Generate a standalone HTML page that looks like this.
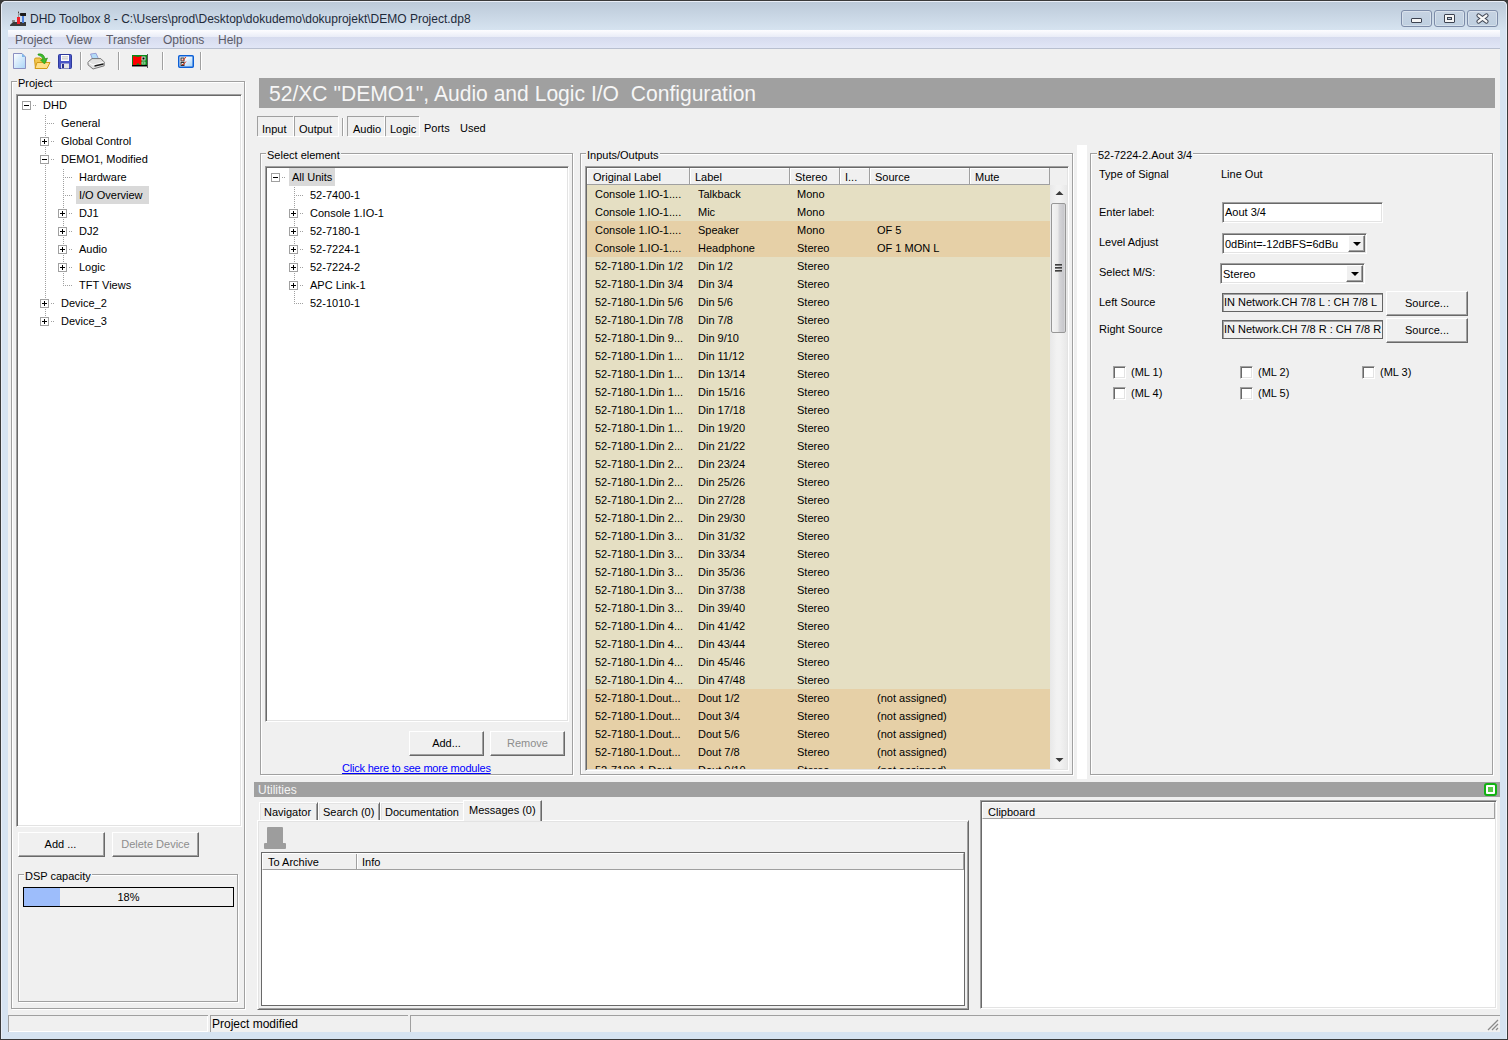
<!DOCTYPE html><html><head><meta charset="utf-8"><style>
*{margin:0;padding:0;box-sizing:border-box}
html,body{width:1508px;height:1040px;overflow:hidden;background:#f0f0f0}
body{position:relative;font-family:"Liberation Sans",sans-serif;font-size:11px;color:#000}
.a{position:absolute}
.t{font-size:11px;line-height:13px;white-space:nowrap}
.etch{border:1px solid #a0a0a0;box-shadow:inset 1px 1px 0 #fff,1px 1px 0 #fff}
.sunk{border:1px solid;border-color:#a0a0a0 #fff #fff #a0a0a0;box-shadow:inset 1px 1px 0 #696969,inset -1px -1px 0 #e3e3e3}
.btn{border:1px solid;border-color:#fff #696969 #696969 #fff;box-shadow:inset -1px -1px 0 #a0a0a0;background:#f0f0f0}
.pb{border:1px solid #a0a0a0;width:9px;height:9px;background:#fff}
.pb:before{content:"";position:absolute;left:1px;top:3px;width:5px;height:1px;background:#000}
.pl:after{content:"";position:absolute;left:3px;top:1px;width:1px;height:5px;background:#000}
.dv{border-left:1px dotted #a0a0a0}
.dh{border-top:1px dotted #a0a0a0}
</style></head><body>
<div class="a" style="left:0px;top:0px;width:1508px;height:1040px;background:#3a3a3a"></div><div class="a" style="left:1px;top:1px;width:1506px;height:1038px;background:#d6e3f1;border-radius:5px 5px 0 0;box-shadow:inset 1px 1px 0 #e9eef7,inset -1px 0 0 #e9eef7"></div><div class="a" style="left:2px;top:2px;width:1504px;height:28px;background:linear-gradient(#bccad9,#d6e3f0);border-radius:4px 4px 0 0"></div><svg class="a" style="left:10px;top:10px" width="17" height="17" viewBox="0 0 17 17">
<path d="M0 15 L3 12 H16 V16 H0 Z" fill="#3a3a3a"/><rect x="2" y="10" width="3" height="2" fill="#888"/>
<rect x="7" y="7" width="3" height="7" fill="#f0202a"/><rect x="12" y="5" width="2" height="8" fill="#4a80e0"/>
<path d="M9.5 4 L10.5 3 H16 V6 H10.5 Z" fill="#1a1a1a"/><rect x="8" y="1" width="1" height="6" fill="#999"/><rect x="8" y="2" width="1" height="1" fill="#444"/></svg><div class="a" style="left:30px;top:12px;font-size:12px;line-height:15px;color:#1e2a3a;white-space:nowrap">DHD Toolbox 8 - C:\Users\prod\Desktop\dokudemo\dokuprojekt\DEMO Project.dp8</div><div class="a" style="left:1401px;top:10px;width:31px;height:17px;border:1px solid #7d8ca8;border-radius:3px;background:linear-gradient(#c6d3e2,#bfcfe0);box-shadow:inset 0 0 0 1px rgba(255,255,255,.35)"></div><div class="a" style="left:1434px;top:10px;width:31px;height:17px;border:1px solid #7d8ca8;border-radius:3px;background:linear-gradient(#c6d3e2,#bfcfe0);box-shadow:inset 0 0 0 1px rgba(255,255,255,.35)"></div><div class="a" style="left:1467px;top:10px;width:31px;height:17px;border:1px solid #7d8ca8;border-radius:3px;background:linear-gradient(#c6d3e2,#bfcfe0);box-shadow:inset 0 0 0 1px rgba(255,255,255,.35)"></div><div class="a" style="left:1411px;top:18px;width:11px;height:5px;background:#f4f4f4;border:1px solid #3c4250;border-radius:1px"></div><div class="a" style="left:1444px;top:14px;width:11px;height:9px;background:#f4f4f4;border:1px solid #3c4250;border-radius:1px"><div class="a" style="left:2px;top:2px;width:5px;height:3px;border:1px solid #3c4250;background:#bcd"></div></div><svg class="a" style="left:1474px;top:11px" width="17" height="15" viewBox="0 0 17 15"><path d="M4.5 4.5 L12.5 10.5 M12.5 4.5 L4.5 10.5" stroke="#3c4250" stroke-width="4.2" stroke-linecap="round"/><path d="M4.5 4.5 L12.5 10.5 M12.5 4.5 L4.5 10.5" stroke="#f6f6f6" stroke-width="2.2" stroke-linecap="round"/></svg><div class="a" style="left:8px;top:30px;width:1492px;height:1002px;background:#f0f0f0"></div><div class="a" style="left:8px;top:30px;width:1492px;height:19px;background:linear-gradient(#fdfdff 0px,#e9ecf7 7px,#d6dbee 7px,#e1e6f6 18px);border-bottom:1px solid #b8bfcf"></div><div class="a" style="left:15px;top:33px;font-size:12px;line-height:15px;color:#5c5c68;white-space:nowrap">Project</div><div class="a" style="left:66px;top:33px;font-size:12px;line-height:15px;color:#5c5c68;white-space:nowrap">View</div><div class="a" style="left:106px;top:33px;font-size:12px;line-height:15px;color:#5c5c68;white-space:nowrap">Transfer</div><div class="a" style="left:163px;top:33px;font-size:12px;line-height:15px;color:#5c5c68;white-space:nowrap">Options</div><div class="a" style="left:218px;top:33px;font-size:12px;line-height:15px;color:#5c5c68;white-space:nowrap">Help</div><svg class="a" style="left:13px;top:53px" width="14" height="17" viewBox="0 0 14 17">
<defs><linearGradient id="gd" x1="0" y1="0" x2="1" y2="1"><stop offset="0" stop-color="#fff"/><stop offset="1" stop-color="#a9d4f6"/></linearGradient></defs>
<path d="M0.5 0.5 H9 L12.5 4 V15.5 H0.5 Z" fill="url(#gd)" stroke="#8b90c2"/><path d="M9 0.5 V4 H12.5 Z" fill="#7fb8ea"/></svg><svg class="a" style="left:34px;top:53px" width="17" height="17" viewBox="0 0 17 17">
<path d="M0.5 6.5 Q0.5 5 2 5 H6 L7 6 H12 V15.5 H1.5 Z" fill="#f3c74e" stroke="#d29a16"/>
<path d="M1 15.5 L3 9.5 H16 L13 15.5 Z" fill="#ffe08a" stroke="#d29a16"/>
<path d="M4 1 Q10 0 11 6 L13.5 5 L10.5 11 L6.5 7 L9 6.5 Q8.5 3 4 2 Z" fill="#3fbd2c" stroke="#1f8a10" stroke-width="0.6"/></svg><svg class="a" style="left:58px;top:54px" width="14" height="15" viewBox="0 0 14 15">
<path d="M0.5 1.5 Q0.5 0.5 1.5 0.5 H12.5 Q13.5 0.5 13.5 1.5 V13.5 Q13.5 14.5 12.5 14.5 H1.5 Q0.5 14.5 0.5 13.5Z" fill="#4a56c6" stroke="#2e3a9c"/>
<rect x="3" y="1" width="8" height="6" fill="#fff"/><rect x="4" y="2.5" width="6" height="0.8" fill="#aaa"/><rect x="4" y="4.5" width="6" height="0.8" fill="#aaa"/>
<rect x="3" y="9.5" width="8" height="5" fill="#e6e6e6"/><rect x="4" y="10" width="2" height="4" fill="#2a2f8a"/></svg><div class="a" style="left:80px;top:52px;width:1px;height:18px;background:#a0a0a0;box-shadow:1px 0 0 #fff"></div><svg class="a" style="left:87px;top:52px" width="18" height="18" viewBox="0 0 18 18">
<path d="M3.5 2 L9 1.3 L11.8 7.5 L6 8.5 Z" fill="#b4dcf7" stroke="#8a8fd0" stroke-width="0.8"/>
<path d="M1 10 L5 6.6 H13.8 L17.2 10 V13.8 L6 17 L1 12.8 Z" fill="#e2e2e2" stroke="#6a6a6a" stroke-width="0.9"/>
<path d="M1.5 10.2 L6 13 L16.8 10.2" fill="none" stroke="#fff" stroke-width="0.9"/>
<path d="M7.5 13.2 L16.5 11.2 V12.8 L7.5 14.8 Z" fill="#1a1a1a"/></svg><div class="a" style="left:118px;top:52px;width:1px;height:18px;background:#a0a0a0;box-shadow:1px 0 0 #fff"></div><svg class="a" style="left:132px;top:54px" width="17" height="14" viewBox="0 0 17 14">
<rect x="0" y="1" width="16" height="12" fill="#fff"/><rect x="0" y="1" width="15" height="11" fill="#0a8a1a"/>
<path d="M1 2 L6 3 L10 2 L9 12 L6 9 L3 12 L1 11 Z" fill="#ff0000"/><rect x="0" y="11" width="15" height="1.5" fill="#000"/>
<rect x="10" y="3" width="3" height="3" fill="#000" stroke="#fff" stroke-width="0.8"/><rect x="10" y="8" width="3" height="2" fill="none" stroke="#fff" stroke-width="0.6"/>
<rect x="15" y="0" width="1" height="14" fill="#555"/></svg><div class="a" style="left:162px;top:52px;width:1px;height:18px;background:#a0a0a0;box-shadow:1px 0 0 #fff"></div><svg class="a" style="left:178px;top:55px" width="16" height="13" viewBox="0 0 16 13">
<defs><linearGradient id="gc" x1="0" y1="0" x2="1" y2="1"><stop offset="0.3" stop-color="#fff"/><stop offset="1" stop-color="#9ccdf7"/></linearGradient></defs>
<rect x="0.75" y="0.75" width="14.5" height="11.5" rx="1" fill="url(#gc)" stroke="#0b5fd6" stroke-width="1.5"/>
<rect x="3" y="3" width="3" height="3" fill="none" stroke="#333" stroke-width="1"/><rect x="3" y="7.5" width="3" height="3" fill="none" stroke="#333" stroke-width="1"/>
<path d="M4 4.5 L5 5.5 L8 2 M4 9 L5 10 L8 6.5" stroke="#e53a1a" stroke-width="1" fill="none"/></svg><div class="a" style="left:200px;top:52px;width:1px;height:18px;background:#a0a0a0;box-shadow:1px 0 0 #fff"></div><div class="a etch" style="left:11px;top:81px;width:234px;height:928px"></div><div class="a t" style="left:17px;top:77px;background:#f0f0f0;padding:0 1px 0 1px">Project</div><div class="a sunk" style="left:16px;top:94px;width:226px;height:733px;background:#fff"></div><div class="a" style="left:45px;top:115px;width:1px;height:207px;background:repeating-linear-gradient(#a0a0a0 0 1px,transparent 1px 2px)"></div><div class="a" style="left:63px;top:169px;width:1px;height:117px;background:repeating-linear-gradient(#a0a0a0 0 1px,transparent 1px 2px)"></div><div class="a" style="left:33px;top:105px;width:3px;height:1px;background:repeating-linear-gradient(90deg,#a0a0a0 0 1px,transparent 1px 2px)"></div><div class="a pb" style="left:22px;top:101px"></div><div class="a t" style="left:43px;top:99px;">DHD</div><div class="a" style="left:47px;top:123px;width:7px;height:1px;background:repeating-linear-gradient(90deg,#a0a0a0 0 1px,transparent 1px 2px)"></div><div class="a t" style="left:61px;top:117px;">General</div><div class="a" style="left:51px;top:141px;width:3px;height:1px;background:repeating-linear-gradient(90deg,#a0a0a0 0 1px,transparent 1px 2px)"></div><div class="a pb pl" style="left:40px;top:137px"></div><div class="a t" style="left:61px;top:135px;">Global Control</div><div class="a" style="left:51px;top:159px;width:3px;height:1px;background:repeating-linear-gradient(90deg,#a0a0a0 0 1px,transparent 1px 2px)"></div><div class="a pb" style="left:40px;top:155px"></div><div class="a t" style="left:61px;top:153px;">DEMO1, Modified</div><div class="a" style="left:65px;top:177px;width:7px;height:1px;background:repeating-linear-gradient(90deg,#a0a0a0 0 1px,transparent 1px 2px)"></div><div class="a t" style="left:79px;top:171px;">Hardware</div><div class="a" style="left:65px;top:195px;width:7px;height:1px;background:repeating-linear-gradient(90deg,#a0a0a0 0 1px,transparent 1px 2px)"></div><div class="a" style="left:76px;top:186px;width:73px;height:18px;background:#d9d9d9"></div><div class="a t" style="left:79px;top:189px;">I/O Overview</div><div class="a" style="left:69px;top:213px;width:3px;height:1px;background:repeating-linear-gradient(90deg,#a0a0a0 0 1px,transparent 1px 2px)"></div><div class="a pb pl" style="left:58px;top:209px"></div><div class="a t" style="left:79px;top:207px;">DJ1</div><div class="a" style="left:69px;top:231px;width:3px;height:1px;background:repeating-linear-gradient(90deg,#a0a0a0 0 1px,transparent 1px 2px)"></div><div class="a pb pl" style="left:58px;top:227px"></div><div class="a t" style="left:79px;top:225px;">DJ2</div><div class="a" style="left:69px;top:249px;width:3px;height:1px;background:repeating-linear-gradient(90deg,#a0a0a0 0 1px,transparent 1px 2px)"></div><div class="a pb pl" style="left:58px;top:245px"></div><div class="a t" style="left:79px;top:243px;">Audio</div><div class="a" style="left:69px;top:267px;width:3px;height:1px;background:repeating-linear-gradient(90deg,#a0a0a0 0 1px,transparent 1px 2px)"></div><div class="a pb pl" style="left:58px;top:263px"></div><div class="a t" style="left:79px;top:261px;">Logic</div><div class="a" style="left:65px;top:285px;width:7px;height:1px;background:repeating-linear-gradient(90deg,#a0a0a0 0 1px,transparent 1px 2px)"></div><div class="a t" style="left:79px;top:279px;">TFT Views</div><div class="a" style="left:51px;top:303px;width:3px;height:1px;background:repeating-linear-gradient(90deg,#a0a0a0 0 1px,transparent 1px 2px)"></div><div class="a pb pl" style="left:40px;top:299px"></div><div class="a t" style="left:61px;top:297px;">Device_2</div><div class="a" style="left:51px;top:321px;width:3px;height:1px;background:repeating-linear-gradient(90deg,#a0a0a0 0 1px,transparent 1px 2px)"></div><div class="a pb pl" style="left:40px;top:317px"></div><div class="a t" style="left:61px;top:315px;">Device_3</div><div class="a btn" style="left:18px;top:832px;width:87px;height:25px"></div><div class="a t" style="left:17px;top:838px;width:87px;text-align:center">Add ...</div><div class="a btn" style="left:112px;top:832px;width:87px;height:25px"></div><div class="a t" style="left:112px;top:838px;width:87px;text-align:center;color:#8d8d8d">Delete Device</div><div class="a etch" style="left:18px;top:874px;width:220px;height:128px"></div><div class="a t" style="left:24px;top:870px;background:#f0f0f0;padding:0 1px 0 1px">DSP capacity</div><div class="a" style="left:23px;top:887px;width:211px;height:20px;border:1px solid #000;background:#f0f0f0"></div><div class="a" style="left:24px;top:888px;width:36px;height:18px;background:#9dbdfb"></div><div class="a t" style="left:23px;top:891px;width:211px;text-align:center">18%</div><div class="a" style="left:8px;top:1015px;width:200px;height:17px;border-top:1px solid #a0a0a0;border-left:1px solid #a0a0a0;box-shadow:inset -1px -1px 0 #fff"></div><div class="a" style="left:210px;top:1015px;width:198px;height:17px;border-top:1px solid #a0a0a0;border-left:1px solid #a0a0a0"></div><div class="a" style="left:410px;top:1015px;width:1090px;height:17px;border-top:1px solid #a0a0a0;border-left:1px solid #a0a0a0"></div><div class="a t" style="left:212px;top:1018px;font-size:12px">Project modified</div><svg class="a" style="left:1487px;top:1019px" width="12" height="12" viewBox="0 0 12 12">
<path d="M11 1 L1 11 M11 5 L5 11 M11 9 L9 11" stroke="#8a8a8a" stroke-width="1.3"/></svg><div class="a" style="left:259px;top:78px;width:1236px;height:30px;background:#a0a0a0"></div><div class="a" style="left:269px;top:81px;font-size:22px;line-height:26px;color:#f6f6f6;white-space:nowrap;transform:scaleX(0.958);transform-origin:0 0">52/XC "DEMO1", Audio and Logic I/O&nbsp; Configuration</div><div class="a" style="left:257px;top:116px;width:36px;height:20px;border-top:1px solid #a0a0a0;border-left:1px solid #a0a0a0;box-shadow:1px 1px 0 #fff"></div><div class="a t" style="left:262px;top:123px;">Input</div><div class="a" style="left:294px;top:116px;width:44px;height:20px;border-top:1px solid #a0a0a0;border-left:1px solid #a0a0a0;box-shadow:1px 1px 0 #fff"></div><div class="a t" style="left:299px;top:123px;">Output</div><div class="a" style="left:347px;top:116px;width:37px;height:20px;border-top:1px solid #a0a0a0;border-left:1px solid #a0a0a0;box-shadow:1px 1px 0 #fff"></div><div class="a t" style="left:353px;top:123px;">Audio</div><div class="a" style="left:385px;top:116px;width:34px;height:20px;border-top:1px solid #a0a0a0;border-left:1px solid #a0a0a0;box-shadow:1px 1px 0 #fff"></div><div class="a t" style="left:390px;top:123px;">Logic</div><div class="a" style="left:342px;top:118px;width:1px;height:18px;background:#a0a0a0;box-shadow:1px 0 0 #fff"></div><div class="a t" style="left:424px;top:122px;">Ports</div><div class="a t" style="left:460px;top:122px;">Used</div><div class="a etch" style="left:260px;top:153px;width:313px;height:622px"></div><div class="a t" style="left:266px;top:149px;background:#f0f0f0;padding:0 1px 0 1px">Select element</div><div class="a sunk" style="left:265px;top:166px;width:304px;height:556px;background:#fff"></div><div class="a" style="left:294px;top:187px;width:1px;height:117px;background:repeating-linear-gradient(#a0a0a0 0 1px,transparent 1px 2px)"></div><div class="a" style="left:282px;top:177px;width:3px;height:1px;background:repeating-linear-gradient(90deg,#a0a0a0 0 1px,transparent 1px 2px)"></div><div class="a" style="left:289px;top:168px;width:46px;height:18px;background:#d9d9d9"></div><div class="a pb" style="left:271px;top:173px"></div><div class="a t" style="left:292px;top:171px;">All Units</div><div class="a" style="left:296px;top:195px;width:7px;height:1px;background:repeating-linear-gradient(90deg,#a0a0a0 0 1px,transparent 1px 2px)"></div><div class="a t" style="left:310px;top:189px;">52-7400-1</div><div class="a" style="left:300px;top:213px;width:3px;height:1px;background:repeating-linear-gradient(90deg,#a0a0a0 0 1px,transparent 1px 2px)"></div><div class="a pb pl" style="left:289px;top:209px"></div><div class="a t" style="left:310px;top:207px;">Console 1.IO-1</div><div class="a" style="left:300px;top:231px;width:3px;height:1px;background:repeating-linear-gradient(90deg,#a0a0a0 0 1px,transparent 1px 2px)"></div><div class="a pb pl" style="left:289px;top:227px"></div><div class="a t" style="left:310px;top:225px;">52-7180-1</div><div class="a" style="left:300px;top:249px;width:3px;height:1px;background:repeating-linear-gradient(90deg,#a0a0a0 0 1px,transparent 1px 2px)"></div><div class="a pb pl" style="left:289px;top:245px"></div><div class="a t" style="left:310px;top:243px;">52-7224-1</div><div class="a" style="left:300px;top:267px;width:3px;height:1px;background:repeating-linear-gradient(90deg,#a0a0a0 0 1px,transparent 1px 2px)"></div><div class="a pb pl" style="left:289px;top:263px"></div><div class="a t" style="left:310px;top:261px;">52-7224-2</div><div class="a" style="left:300px;top:285px;width:3px;height:1px;background:repeating-linear-gradient(90deg,#a0a0a0 0 1px,transparent 1px 2px)"></div><div class="a pb pl" style="left:289px;top:281px"></div><div class="a t" style="left:310px;top:279px;">APC Link-1</div><div class="a" style="left:296px;top:303px;width:7px;height:1px;background:repeating-linear-gradient(90deg,#a0a0a0 0 1px,transparent 1px 2px)"></div><div class="a t" style="left:310px;top:297px;">52-1010-1</div><div class="a btn" style="left:409px;top:731px;width:75px;height:25px"></div><div class="a t" style="left:409px;top:737px;width:75px;text-align:center">Add...</div><div class="a btn" style="left:490px;top:731px;width:75px;height:25px"></div><div class="a t" style="left:490px;top:737px;width:75px;text-align:center;color:#8d8d8d">Remove</div><div class="a t" style="left:342px;top:762px;color:#0000ff;text-decoration:underline;letter-spacing:-0.2px">Click here to see more modules</div><div class="a" style="left:1077px;top:145px;width:10px;height:634px;background:#fff"></div><div class="a etch" style="left:580px;top:153px;width:493px;height:622px"></div><div class="a t" style="left:586px;top:149px;background:#f0f0f0;padding:0 1px 0 1px">Inputs/Outputs</div><div class="a sunk" style="left:585px;top:166px;width:484px;height:605px;background:#f0f0f0"></div><div class="a" style="left:587px;top:168px;width:463px;height:17px;background:#f0f0f0;border-bottom:1px solid #a0a0a0;border-top:1px solid #fff"></div><div class="a" style="left:587px;top:168px;width:1px;height:16px;background:#fff"></div><div class="a" style="left:689px;top:168px;width:1px;height:16px;background:#a0a0a0"></div><div class="a t" style="left:593px;top:171px;">Original Label</div><div class="a" style="left:690px;top:168px;width:1px;height:16px;background:#fff"></div><div class="a" style="left:789px;top:168px;width:1px;height:16px;background:#a0a0a0"></div><div class="a t" style="left:695px;top:171px;">Label</div><div class="a" style="left:790px;top:168px;width:1px;height:16px;background:#fff"></div><div class="a" style="left:839px;top:168px;width:1px;height:16px;background:#a0a0a0"></div><div class="a t" style="left:795px;top:171px;">Stereo</div><div class="a" style="left:840px;top:168px;width:1px;height:16px;background:#fff"></div><div class="a" style="left:869px;top:168px;width:1px;height:16px;background:#a0a0a0"></div><div class="a t" style="left:845px;top:171px;">I...</div><div class="a" style="left:870px;top:168px;width:1px;height:16px;background:#fff"></div><div class="a" style="left:969px;top:168px;width:1px;height:16px;background:#a0a0a0"></div><div class="a t" style="left:875px;top:171px;">Source</div><div class="a" style="left:970px;top:168px;width:1px;height:16px;background:#fff"></div><div class="a" style="left:1049px;top:168px;width:1px;height:16px;background:#a0a0a0"></div><div class="a t" style="left:975px;top:171px;">Mute</div><div class="a" style="left:587px;top:185px;width:463px;height:584px;overflow:hidden"><div class="a" style="left:0;top:0px;width:463px;height:18px;background:#e5dfc3"></div><div class="a t" style="left:8px;top:3px">Console 1.IO-1....</div><div class="a t" style="left:111px;top:3px">Talkback</div><div class="a t" style="left:210px;top:3px">Mono</div><div class="a" style="left:0;top:18px;width:463px;height:18px;background:#e5dfc3"></div><div class="a t" style="left:8px;top:21px">Console 1.IO-1....</div><div class="a t" style="left:111px;top:21px">Mic</div><div class="a t" style="left:210px;top:21px">Mono</div><div class="a" style="left:0;top:36px;width:463px;height:18px;background:#e6d0a7"></div><div class="a t" style="left:8px;top:39px">Console 1.IO-1....</div><div class="a t" style="left:111px;top:39px">Speaker</div><div class="a t" style="left:210px;top:39px">Mono</div><div class="a t" style="left:290px;top:39px">OF 5</div><div class="a" style="left:0;top:54px;width:463px;height:18px;background:#e6d0a7"></div><div class="a t" style="left:8px;top:57px">Console 1.IO-1....</div><div class="a t" style="left:111px;top:57px">Headphone</div><div class="a t" style="left:210px;top:57px">Stereo</div><div class="a t" style="left:290px;top:57px">OF 1 MON L</div><div class="a" style="left:0;top:72px;width:463px;height:18px;background:#e5dfc3"></div><div class="a t" style="left:8px;top:75px">52-7180-1.Din 1/2</div><div class="a t" style="left:111px;top:75px">Din 1/2</div><div class="a t" style="left:210px;top:75px">Stereo</div><div class="a" style="left:0;top:90px;width:463px;height:18px;background:#e5dfc3"></div><div class="a t" style="left:8px;top:93px">52-7180-1.Din 3/4</div><div class="a t" style="left:111px;top:93px">Din 3/4</div><div class="a t" style="left:210px;top:93px">Stereo</div><div class="a" style="left:0;top:108px;width:463px;height:18px;background:#e5dfc3"></div><div class="a t" style="left:8px;top:111px">52-7180-1.Din 5/6</div><div class="a t" style="left:111px;top:111px">Din 5/6</div><div class="a t" style="left:210px;top:111px">Stereo</div><div class="a" style="left:0;top:126px;width:463px;height:18px;background:#e5dfc3"></div><div class="a t" style="left:8px;top:129px">52-7180-1.Din 7/8</div><div class="a t" style="left:111px;top:129px">Din 7/8</div><div class="a t" style="left:210px;top:129px">Stereo</div><div class="a" style="left:0;top:144px;width:463px;height:18px;background:#e5dfc3"></div><div class="a t" style="left:8px;top:147px">52-7180-1.Din 9...</div><div class="a t" style="left:111px;top:147px">Din 9/10</div><div class="a t" style="left:210px;top:147px">Stereo</div><div class="a" style="left:0;top:162px;width:463px;height:18px;background:#e5dfc3"></div><div class="a t" style="left:8px;top:165px">52-7180-1.Din 1...</div><div class="a t" style="left:111px;top:165px">Din 11/12</div><div class="a t" style="left:210px;top:165px">Stereo</div><div class="a" style="left:0;top:180px;width:463px;height:18px;background:#e5dfc3"></div><div class="a t" style="left:8px;top:183px">52-7180-1.Din 1...</div><div class="a t" style="left:111px;top:183px">Din 13/14</div><div class="a t" style="left:210px;top:183px">Stereo</div><div class="a" style="left:0;top:198px;width:463px;height:18px;background:#e5dfc3"></div><div class="a t" style="left:8px;top:201px">52-7180-1.Din 1...</div><div class="a t" style="left:111px;top:201px">Din 15/16</div><div class="a t" style="left:210px;top:201px">Stereo</div><div class="a" style="left:0;top:216px;width:463px;height:18px;background:#e5dfc3"></div><div class="a t" style="left:8px;top:219px">52-7180-1.Din 1...</div><div class="a t" style="left:111px;top:219px">Din 17/18</div><div class="a t" style="left:210px;top:219px">Stereo</div><div class="a" style="left:0;top:234px;width:463px;height:18px;background:#e5dfc3"></div><div class="a t" style="left:8px;top:237px">52-7180-1.Din 1...</div><div class="a t" style="left:111px;top:237px">Din 19/20</div><div class="a t" style="left:210px;top:237px">Stereo</div><div class="a" style="left:0;top:252px;width:463px;height:18px;background:#e5dfc3"></div><div class="a t" style="left:8px;top:255px">52-7180-1.Din 2...</div><div class="a t" style="left:111px;top:255px">Din 21/22</div><div class="a t" style="left:210px;top:255px">Stereo</div><div class="a" style="left:0;top:270px;width:463px;height:18px;background:#e5dfc3"></div><div class="a t" style="left:8px;top:273px">52-7180-1.Din 2...</div><div class="a t" style="left:111px;top:273px">Din 23/24</div><div class="a t" style="left:210px;top:273px">Stereo</div><div class="a" style="left:0;top:288px;width:463px;height:18px;background:#e5dfc3"></div><div class="a t" style="left:8px;top:291px">52-7180-1.Din 2...</div><div class="a t" style="left:111px;top:291px">Din 25/26</div><div class="a t" style="left:210px;top:291px">Stereo</div><div class="a" style="left:0;top:306px;width:463px;height:18px;background:#e5dfc3"></div><div class="a t" style="left:8px;top:309px">52-7180-1.Din 2...</div><div class="a t" style="left:111px;top:309px">Din 27/28</div><div class="a t" style="left:210px;top:309px">Stereo</div><div class="a" style="left:0;top:324px;width:463px;height:18px;background:#e5dfc3"></div><div class="a t" style="left:8px;top:327px">52-7180-1.Din 2...</div><div class="a t" style="left:111px;top:327px">Din 29/30</div><div class="a t" style="left:210px;top:327px">Stereo</div><div class="a" style="left:0;top:342px;width:463px;height:18px;background:#e5dfc3"></div><div class="a t" style="left:8px;top:345px">52-7180-1.Din 3...</div><div class="a t" style="left:111px;top:345px">Din 31/32</div><div class="a t" style="left:210px;top:345px">Stereo</div><div class="a" style="left:0;top:360px;width:463px;height:18px;background:#e5dfc3"></div><div class="a t" style="left:8px;top:363px">52-7180-1.Din 3...</div><div class="a t" style="left:111px;top:363px">Din 33/34</div><div class="a t" style="left:210px;top:363px">Stereo</div><div class="a" style="left:0;top:378px;width:463px;height:18px;background:#e5dfc3"></div><div class="a t" style="left:8px;top:381px">52-7180-1.Din 3...</div><div class="a t" style="left:111px;top:381px">Din 35/36</div><div class="a t" style="left:210px;top:381px">Stereo</div><div class="a" style="left:0;top:396px;width:463px;height:18px;background:#e5dfc3"></div><div class="a t" style="left:8px;top:399px">52-7180-1.Din 3...</div><div class="a t" style="left:111px;top:399px">Din 37/38</div><div class="a t" style="left:210px;top:399px">Stereo</div><div class="a" style="left:0;top:414px;width:463px;height:18px;background:#e5dfc3"></div><div class="a t" style="left:8px;top:417px">52-7180-1.Din 3...</div><div class="a t" style="left:111px;top:417px">Din 39/40</div><div class="a t" style="left:210px;top:417px">Stereo</div><div class="a" style="left:0;top:432px;width:463px;height:18px;background:#e5dfc3"></div><div class="a t" style="left:8px;top:435px">52-7180-1.Din 4...</div><div class="a t" style="left:111px;top:435px">Din 41/42</div><div class="a t" style="left:210px;top:435px">Stereo</div><div class="a" style="left:0;top:450px;width:463px;height:18px;background:#e5dfc3"></div><div class="a t" style="left:8px;top:453px">52-7180-1.Din 4...</div><div class="a t" style="left:111px;top:453px">Din 43/44</div><div class="a t" style="left:210px;top:453px">Stereo</div><div class="a" style="left:0;top:468px;width:463px;height:18px;background:#e5dfc3"></div><div class="a t" style="left:8px;top:471px">52-7180-1.Din 4...</div><div class="a t" style="left:111px;top:471px">Din 45/46</div><div class="a t" style="left:210px;top:471px">Stereo</div><div class="a" style="left:0;top:486px;width:463px;height:18px;background:#e5dfc3"></div><div class="a t" style="left:8px;top:489px">52-7180-1.Din 4...</div><div class="a t" style="left:111px;top:489px">Din 47/48</div><div class="a t" style="left:210px;top:489px">Stereo</div><div class="a" style="left:0;top:504px;width:463px;height:18px;background:#e6d0a7"></div><div class="a t" style="left:8px;top:507px">52-7180-1.Dout...</div><div class="a t" style="left:111px;top:507px">Dout 1/2</div><div class="a t" style="left:210px;top:507px">Stereo</div><div class="a t" style="left:290px;top:507px">(not assigned)</div><div class="a" style="left:0;top:522px;width:463px;height:18px;background:#e6d0a7"></div><div class="a t" style="left:8px;top:525px">52-7180-1.Dout...</div><div class="a t" style="left:111px;top:525px">Dout 3/4</div><div class="a t" style="left:210px;top:525px">Stereo</div><div class="a t" style="left:290px;top:525px">(not assigned)</div><div class="a" style="left:0;top:540px;width:463px;height:18px;background:#e6d0a7"></div><div class="a t" style="left:8px;top:543px">52-7180-1.Dout...</div><div class="a t" style="left:111px;top:543px">Dout 5/6</div><div class="a t" style="left:210px;top:543px">Stereo</div><div class="a t" style="left:290px;top:543px">(not assigned)</div><div class="a" style="left:0;top:558px;width:463px;height:18px;background:#e6d0a7"></div><div class="a t" style="left:8px;top:561px">52-7180-1.Dout...</div><div class="a t" style="left:111px;top:561px">Dout 7/8</div><div class="a t" style="left:210px;top:561px">Stereo</div><div class="a t" style="left:290px;top:561px">(not assigned)</div><div class="a" style="left:0;top:576px;width:463px;height:18px;background:#e6d0a7"></div><div class="a t" style="left:8px;top:579px">52-7180-1.Dout...</div><div class="a t" style="left:111px;top:579px">Dout 9/10</div><div class="a t" style="left:210px;top:579px">Stereo</div><div class="a t" style="left:290px;top:579px">(not assigned)</div></div><div class="a" style="left:1050px;top:168px;width:17px;height:601px;background:#f0f0f0"></div><div class="a" style="left:1050px;top:185px;width:17px;height:584px;background:linear-gradient(90deg,#e8e8e8,#f2f2f2 40%,#f2f2f2 60%,#e8e8e8)"></div><svg class="a" style="left:1055px;top:190px" width="9" height="6" viewBox="0 0 9 6"><path d="M0.5 5 L4.5 1 L8.5 5 Z" fill="#3a3a3a"/></svg><svg class="a" style="left:1055px;top:757px" width="9" height="6" viewBox="0 0 9 6"><path d="M0.5 1 L4.5 5 L8.5 1 Z" fill="#3a3a3a"/></svg><div class="a" style="left:1051px;top:203px;width:15px;height:130px;border:1px solid #979797;border-radius:2px;background:linear-gradient(90deg,#f4f4f4,#eaeaea 45%,#d6d6d9 55%,#c8c8cc 90%,#dcdcdc)"></div><div class="a" style="left:1055px;top:264px;width:7px;height:2px;background:linear-gradient(#222,#999)"></div><div class="a" style="left:1055px;top:267px;width:7px;height:2px;background:linear-gradient(#222,#999)"></div><div class="a" style="left:1055px;top:270px;width:7px;height:2px;background:linear-gradient(#222,#999)"></div><div class="a etch" style="left:1090px;top:153px;width:403px;height:622px"></div><div class="a t" style="left:1097px;top:149px;background:#f0f0f0;padding:0 1px 0 1px">52-7224-2.Aout 3/4</div><div class="a t" style="left:1099px;top:168px;">Type of Signal</div><div class="a t" style="left:1221px;top:168px;">Line Out</div><div class="a t" style="left:1099px;top:206px;">Enter label:</div><div class="a sunk" style="left:1222px;top:202px;width:161px;height:21px;background:#fff"></div><div class="a t" style="left:1225px;top:206px;">Aout 3/4</div><div class="a t" style="left:1099px;top:236px;">Level Adjust</div><div class="a sunk" style="left:1222px;top:233px;width:145px;height:21px;background:#fff"></div><div class="a t" style="left:1225px;top:238px;">0dBint=-12dBFS=6dBu</div><div class="a btn" style="left:1348px;top:235px;width:17px;height:17px"></div><svg class="a" style="left:1353px;top:242px" width="8" height="5" viewBox="0 0 8 5"><path d="M0 0 H8 L4 4 Z" fill="#000"/></svg><div class="a t" style="left:1099px;top:266px;">Select M/S:</div><div class="a sunk" style="left:1220px;top:263px;width:145px;height:21px;background:#fff"></div><div class="a t" style="left:1223px;top:268px;">Stereo</div><div class="a btn" style="left:1346px;top:265px;width:17px;height:17px"></div><svg class="a" style="left:1351px;top:272px" width="8" height="5" viewBox="0 0 8 5"><path d="M0 0 H8 L4 4 Z" fill="#000"/></svg><div class="a t" style="left:1099px;top:296px;">Left Source</div><div class="a" style="left:1222px;top:293px;width:161px;height:19px;border:1px solid #646464;box-shadow:inset 1px 1px 0 #a0a0a0;background:#f0f0f0"></div><div class="a t" style="left:1224px;top:296px;">IN Network.CH 7/8 L : CH 7/8 L</div><div class="a btn" style="left:1386px;top:291px;width:82px;height:25px"></div><div class="a t" style="left:1386px;top:297px;width:82px;text-align:center">Source...</div><div class="a t" style="left:1099px;top:323px;">Right Source</div><div class="a" style="left:1222px;top:320px;width:161px;height:19px;border:1px solid #646464;box-shadow:inset 1px 1px 0 #a0a0a0;background:#f0f0f0"></div><div class="a t" style="left:1224px;top:323px;">IN Network.CH 7/8 R : CH 7/8 R</div><div class="a btn" style="left:1386px;top:318px;width:82px;height:25px"></div><div class="a t" style="left:1386px;top:324px;width:82px;text-align:center">Source...</div><div class="a sunk" style="left:1113px;top:366px;width:13px;height:13px;background:#fff"></div><div class="a t" style="left:1131px;top:366px;">(ML 1)</div><div class="a sunk" style="left:1240px;top:366px;width:13px;height:13px;background:#fff"></div><div class="a t" style="left:1258px;top:366px;">(ML 2)</div><div class="a sunk" style="left:1362px;top:366px;width:13px;height:13px;background:#fff"></div><div class="a t" style="left:1380px;top:366px;">(ML 3)</div><div class="a sunk" style="left:1113px;top:387px;width:13px;height:13px;background:#fff"></div><div class="a t" style="left:1131px;top:387px;">(ML 4)</div><div class="a sunk" style="left:1240px;top:387px;width:13px;height:13px;background:#fff"></div><div class="a t" style="left:1258px;top:387px;">(ML 5)</div><div class="a" style="left:254px;top:782px;width:1246px;height:15px;background:#a0a0a0"></div><div class="a t" style="left:258px;top:784px;font-size:12px;line-height:13px;color:#f4f4f4">Utilities</div><svg class="a" style="left:1484px;top:783px" width="13" height="13" viewBox="0 0 13 13"><rect x="1" y="1" width="11" height="11" rx="2" fill="#fff" stroke="#11b011" stroke-width="2"/><rect x="4" y="4" width="5" height="5" fill="#55cc44"/></svg><div class="a" style="left:257px;top:820px;width:712px;height:190px;border-top:1px solid #fff;border-left:1px solid #fff;border-right:1px solid #696969;border-bottom:1px solid #696969;box-shadow:inset 1px 1px 0 #e3e3e3,inset -1px -1px 0 #a0a0a0"></div><div class="a" style="left:259px;top:802px;width:59px;height:18px;border-top:1px solid #fff;border-left:1px solid #fff;background:#f0f0f0;border-right:1px solid #696969;box-shadow:inset 1px 1px 0 #e3e3e3,inset -1px 0 0 #a0a0a0"></div><div class="a t" style="left:264px;top:806px;">Navigator</div><div class="a" style="left:318px;top:802px;width:62px;height:18px;border-top:1px solid #fff;border-left:1px solid #fff;background:#f0f0f0;border-right:1px solid #696969;box-shadow:inset 1px 1px 0 #e3e3e3,inset -1px 0 0 #a0a0a0"></div><div class="a t" style="left:323px;top:806px;">Search (0)</div><div class="a" style="left:380px;top:802px;width:83px;height:18px;border-top:1px solid #fff;border-left:1px solid #fff;background:#f0f0f0;box-shadow:inset 1px 1px 0 #e3e3e3"></div><div class="a t" style="left:385px;top:806px;">Documentation</div><div class="a" style="left:463px;top:800px;width:79px;height:21px;border-top:1px solid #fff;border-left:1px solid #fff;border-right:1px solid #696969;background:#f0f0f0;box-shadow:inset -1px 0 0 #a0a0a0"></div><div class="a t" style="left:469px;top:804px;">Messages (0)</div><svg class="a" style="left:264px;top:827px" width="22" height="22" viewBox="0 0 22 22"><path d="M3 1 Q3 0 4 0 H18 Q19 0 19 1 V16 H21 Q22 16 22 17 V21 Q22 22 21 22 H1 Q0 22 0 21 V17 Q0 16 1 16 H3 Z" fill="#9d9d9d"/></svg><div class="a" style="left:261px;top:852px;width:704px;height:154px;border:1px solid #696969;background:#fff"></div><div class="a" style="left:262px;top:853px;width:702px;height:17px;background:#f0f0f0;border-top:1px solid #fff;border-left:1px solid #fff;border-bottom:1px solid #a0a0a0;border-right:1px solid #a0a0a0"></div><div class="a" style="left:356px;top:854px;width:1px;height:15px;background:#a0a0a0;box-shadow:1px 0 0 #fff"></div><div class="a t" style="left:268px;top:856px;">To Archive</div><div class="a t" style="left:362px;top:856px;">Info</div><div class="a sunk" style="left:980px;top:800px;width:517px;height:209px;background:#fff"></div><div class="a" style="left:982px;top:802px;width:513px;height:17px;background:#f0f0f0;border-top:1px solid #fff;border-left:1px solid #fff;border-bottom:1px solid #a0a0a0;border-right:1px solid #a0a0a0"></div><div class="a t" style="left:988px;top:806px;">Clipboard</div></body></html>
